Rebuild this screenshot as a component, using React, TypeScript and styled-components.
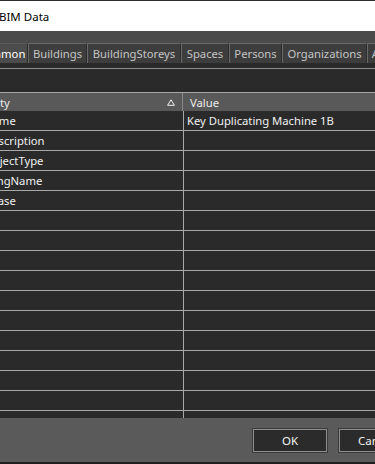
import React from "react";
import styled, { createGlobalStyle } from "styled-components";

const GlobalStyle = createGlobalStyle`
  html, body {
    margin: 0;
    padding: 0;
    background: #1f1f1f;
    overflow: hidden;
  }
  body {
    font-family: "Noto Sans", "Liberation Sans", sans-serif;
    font-size: 11.25px;
  }
`;

const Window = styled.div`
  width: 469px;
  height: 462px;
  margin-left: -44px;
  display: flex;
  flex-direction: column;
  background: #4b4b4b;
  border-top: 1px solid #2e2e2e;
  box-sizing: border-box;
`;

const TitleBar = styled.div`
  height: 30px;
  flex: none;
  background: #ffffff;
  display: flex;
  align-items: center;
  padding-left: 43px;
  color: #000;
  font-size: 11.5px;
`;

const TabStrip = styled.div`
  flex: none;
  display: flex;
  align-items: flex-end;
  padding: 12px 0 0 18px;
  height: 32px;
  box-sizing: border-box;
  background: #4b4b4b;
`;

const Tab = styled.div<{ $active?: boolean; $w: number }>`
  height: 20px;
  width: ${(p) => p.$w}px;
  flex: none;
  box-sizing: border-box;
  display: flex;
  align-items: center;
  justify-content: center;
  background: ${(p) => (p.$active ? "#4c4c4c" : "#3d3d3d")};
  color: ${(p) => (p.$active ? "#ffffff" : "#c4c4c4")};
  border-top: 1px solid ${(p) => (p.$active ? "#5c5c5c" : "#696969")};
  border-left: 1px solid #6a6a6a;
  border-right: 1px solid #2c2c2c;
  white-space: nowrap;
  overflow: hidden;
  padding-bottom: 1px;
`;

const Panel = styled.div`
  flex: 1;
  display: flex;
  flex-direction: column;
  background: #2a2a2a;
  padding: 5px 0 0 4px;
  min-height: 0;
`;

const Toolbar = styled.div`
  height: 23px;
  flex: none;
  border-top: 1px solid #8c8c8c;
  border-bottom: 1px solid #a6a6a6;
  background: #2a2a2a;
`;

const Grid = styled.div`
  flex: 1;
  display: grid;
  grid-template-columns: 223px 1fr;
  grid-template-rows: 18px;
  grid-auto-rows: 20px;
  align-content: start;
  overflow: hidden;
  background: #2a2a2a;
  background-image: linear-gradient(#a8a8a8, #a8a8a8);
  background-size: 1px 100%;
  background-position: 223px 0;
  background-repeat: no-repeat;
`;

const HeaderCell = styled.div<{ $divider?: boolean; $pad: number }>`
  height: 18px;
  box-sizing: border-box;
  background: #595959;
  color: #ececec;
  display: flex;
  align-items: center;
  justify-content: space-between;
  padding: 0 7px 0 ${(p) => p.$pad}px;
  border-right: ${(p) => (p.$divider ? "1px solid #8a8a8a" : "none")};
  white-space: nowrap;
`;

const Cell = styled.div<{ $pad: number }>`
  box-sizing: border-box;
  height: 20px;
  border-bottom: 1px solid #a8a8a8;
  color: #f0f0f0;
  display: flex;
  align-items: center;
  padding: 0 0 1px ${(p) => p.$pad}px;
  white-space: nowrap;
  overflow: hidden;
`;

const HeaderRow = styled.div`
  display: contents;
`;

const Footer = styled.div`
  height: 44px;
  flex: none;
  background: #5a5a5a;
  display: flex;
  justify-content: flex-end;
  align-items: flex-start;
  gap: 12px;
  padding: 11px 12px 0 0;
  box-sizing: border-box;
`;

const Button = styled.button`
  width: 74px;
  height: 23px;
  box-sizing: border-box;
  background: #2b2b2b;
  color: #f4f4f4;
  border: 1px solid #8e8e8e;
  box-shadow: 0 0 0 1px #3a3a3a;
  font-family: inherit;
  font-size: 11.5px;
  padding: 0;
`;

const SortIcon = () => (
  <svg width="8" height="7" viewBox="0 0 8 7" fill="none">
    <path d="M4 0.8 L7.4 6.3 L0.6 6.3 Z" stroke="#f2f2f2" strokeWidth="1" />
  </svg>
);

const tabs: { label: string; w: number; active?: boolean }[] = [
  { label: "Common", w: 54, active: true },
  { label: "Buildings", w: 59 },
  { label: "BuildingStoreys", w: 94 },
  { label: "Spaces", w: 48 },
  { label: "Persons", w: 53 },
  { label: "Organizations", w: 85 },
  { label: "Addresses", w: 64 },
];

const rows: [string, string][] = [
  ["Name", "Key Duplicating Machine 1B"],
  ["Description", ""],
  ["ObjectType", ""],
  ["LongName", ""],
  ["Phase", ""],
];

export default function App() {
  const all: [string, string][] = [...rows];
  while (all.length < 16) all.push(["", ""]);
  return (
    <>
      <GlobalStyle />
      <Window>
        <TitleBar>BIM Data</TitleBar>
        <TabStrip>
          {tabs.map((t) => (
            <Tab key={t.label} $active={t.active} $w={t.w}>
              {t.label}
            </Tab>
          ))}
        </TabStrip>
        <Panel>
          <Toolbar />
          <Grid>
            <HeaderRow>
              <HeaderCell $divider $pad={4}>
                <span>Property</span>
                <SortIcon />
              </HeaderCell>
              <HeaderCell $pad={7}>
                <span>Value</span>
              </HeaderCell>
            </HeaderRow>
            {all.map(([k, v], i) => (
              <React.Fragment key={i}>
                <Cell $pad={24}>{k}</Cell>
                <Cell $pad={4}>{v}</Cell>
              </React.Fragment>
            ))}
          </Grid>
        </Panel>
        <Footer>
          <Button>OK</Button>
          <Button>Cancel</Button>
        </Footer>
      </Window>
    </>
  );
}
